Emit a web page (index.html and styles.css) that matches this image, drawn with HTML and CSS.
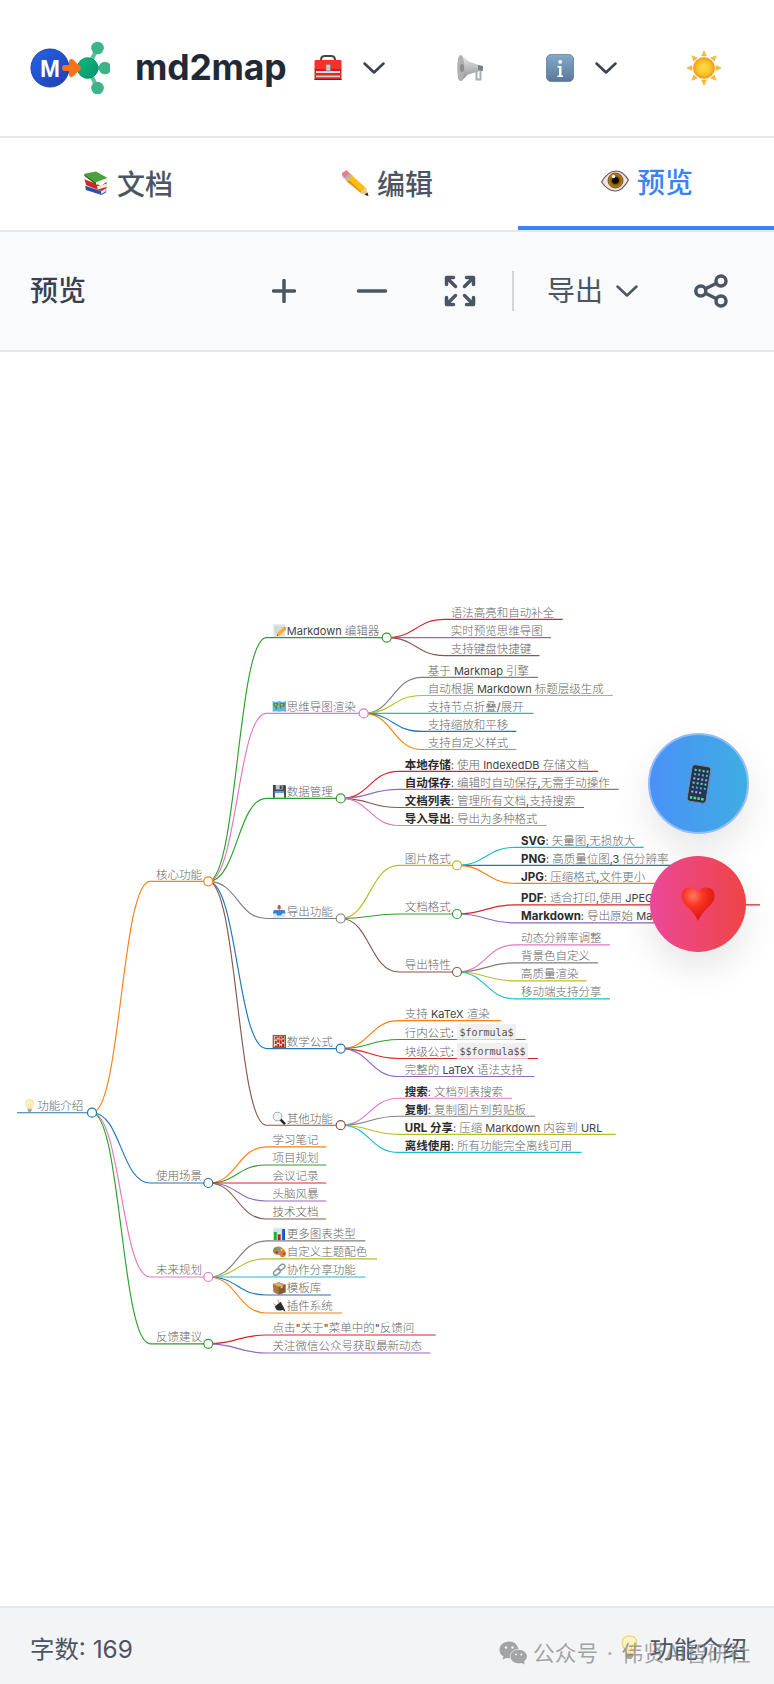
FILE: index.html
```html
<!DOCTYPE html>
<html lang="zh-CN">
<head>
    <meta charset="UTF-8">
    <meta name="viewport" content="width=device-width, initial-scale=1.0">
    <title>md2map</title>
    <link rel="stylesheet" href="styles.css">
</head>
<body>
    <!-- Shared icons -->
    <svg class="sprite" width="0" height="0" aria-hidden="true">
        <defs>
            <linearGradient id="gInfo" x1="0" y1="0" x2="0" y2="1"><stop offset="0" stop-color="#86a9c8"/><stop offset="1" stop-color="#57789b"/></linearGradient>
            <radialGradient id="gSun"><stop offset="0" stop-color="#ffe14a"/><stop offset="0.6" stop-color="#fdc52c"/><stop offset="1" stop-color="#f39a16"/></radialGradient>
            <linearGradient id="gHorn" x1="0" y1="0" x2="0" y2="1"><stop offset="0" stop-color="#ededed"/><stop offset="1" stop-color="#8c8c8c"/></linearGradient>
            <radialGradient id="gHeart" cx="0.35" cy="0.25" r="0.85"><stop offset="0" stop-color="#ff7b62"/><stop offset="0.35" stop-color="#fb3524"/><stop offset="1" stop-color="#cf0c05"/></radialGradient>
            <radialGradient id="gIris"><stop offset="0.2" stop-color="#2a1404"/><stop offset="0.6" stop-color="#8a5a10"/><stop offset="1" stop-color="#c99314"/></radialGradient>
            <linearGradient id="gBlue" x1="0" y1="0" x2="1" y2="1"><stop offset="0" stop-color="#2563eb"/><stop offset="1" stop-color="#1e40af"/></linearGradient>
            <linearGradient id="gGreen" x1="0" y1="0" x2="1" y2="1"><stop offset="0" stop-color="#10b981"/><stop offset="1" stop-color="#059669"/></linearGradient>
        </defs>
        <symbol id="chevron" viewBox="0 0 22 12"><path d="M1.5 1.5 11 10.5 20.5 1.5" fill="none" stroke="currentColor" stroke-width="2.5" stroke-linecap="round" stroke-linejoin="round"/></symbol>
        <symbol id="toolbox" viewBox="0 0 28 28">
            <path d="M7 9V6q0-4 4-4h6q4 0 4 4v3" fill="none" stroke="#444" stroke-width="2"/>
            <rect x="0.5" y="6" width="27" height="11" rx="1" fill="#fb2f2c"/><rect x="0.5" y="17" width="27" height="9" fill="#e32623"/>
            <rect x="2" y="17" width="24" height="2" fill="#d5dce2"/><rect x="2" y="21.5" width="24" height="1.8" fill="#c3d0d8"/>
            <rect x="0.5" y="15.5" width="27" height="1" fill="#8f1515"/><rect x="0.5" y="25" width="27" height="1" fill="#8f1515"/>
            <rect x="12" y="10.5" width="4.5" height="6.5" fill="#c9c9c9" stroke="#777" stroke-width="0.6"/>
        </symbol>
        <symbol id="megaphone" viewBox="0 0 28 28">
            <path d="M20.500 16v9.500h4V15" fill="none" stroke="#a3b0ba" stroke-width="2"/>
            <path d="M4 1Q8 3 13 7.500L24 11.500Q27 12 26.500 15.500L24 17 12 20.500 6 26.500Q3 28 2 23V5Q2 1 4 1z" fill="url(#gHorn)"/>
            <ellipse cx="4.800" cy="14" rx="3.600" ry="13" fill="#b0b0b0"/><ellipse cx="6" cy="14" rx="2" ry="4" fill="#8b8b8b"/>
            <path d="M22 11l5 1v5l-5-1z" fill="#77828b"/>
        </symbol>
        <symbol id="info" viewBox="0 0 28 28">
            <rect x="0.4" y="0.4" width="27.200" height="27.200" rx="5" fill="url(#gInfo)" stroke="#587895" stroke-width="0.8"/>
            <circle cx="14.200" cy="7.800" r="1.900" fill="#fff"/><path d="M11.500 12h4v9.500h1.500v1.400h-5.600v-1.400h1.700v-8.100h-1.600z" fill="#fff"/>
        </symbol>
        <symbol id="sun" viewBox="0 0 36 36">
            <g fill="#f9b934" stroke="#eeaa38" stroke-width="0.4">
                <path id="ray" d="M18 0.500 20.500 6h-5z"/><use href="#ray" transform="rotate(45 18 18)"/><use href="#ray" transform="rotate(90 18 18)"/><use href="#ray" transform="rotate(135 18 18)"/><use href="#ray" transform="rotate(180 18 18)"/><use href="#ray" transform="rotate(225 18 18)"/><use href="#ray" transform="rotate(270 18 18)"/><use href="#ray" transform="rotate(315 18 18)"/>
            </g>
            <circle cx="18" cy="18" r="10.600" fill="url(#gSun)" stroke="#e89d25" stroke-width="0.6"/>
        </symbol>
        <symbol id="books" viewBox="0 0 28 28">
            <path d="M2.500 17l17 5.500L25 19v5l-5 3-17-5.500z" fill="#2b52a8"/><path d="M19.500 23l5-3v3l-5 3z" fill="#e8eaf0"/>
            <path d="M1.500 10l18 7 6-4v6l-6 3.500-16-6z" fill="#d3261f"/><path d="M15 17.500l11-3v3.500l-10 3z" fill="#ece8e4"/>
            <path d="M1.500 4 14 1.500 26.500 8.500 14 13.500z" fill="#4ba13a"/><path d="M1.500 4l12.500 9.500v2.500L1.500 6.500z" fill="#276e28"/><path d="M14 13.500l12-5v2.500l-12 5z" fill="#e9efe5"/>
        </symbol>
        <symbol id="pencil" viewBox="0 0 28 28">
            <path d="M1 4 5.500 1l4 4-5 5Q0 7 1 4z" fill="#ef7f86"/><path d="M9 4l3 3-6 5.500-2.500-3z" fill="#b1b8c0"/>
            <path d="M11 6.500 26 20l-5.500 4.500L5.500 12z" fill="#fbbd12"/><path d="M9 12 21.500 24l-3-1.500L5.500 12z" fill="#df8c07"/>
            <path d="M24.500 18.500 27.500 27l-9-3z" fill="#efc795"/><path d="M26.500 23.500l1 3.500-4-1.300z" fill="#222"/>
        </symbol>
        <symbol id="eye" viewBox="0 0 28 22">
            <path d="M0.500 12Q7 1 15 1 22 1 27.500 10 21 21.500 14 21 7 21 0.500 12z" fill="#eee5e2" stroke="#6d504b" stroke-width="1.200"/>
            <circle cx="14.500" cy="10.500" r="7.500" fill="url(#gIris)" stroke="#563509" stroke-width="0.8"/><circle cx="14.500" cy="10.500" r="3.300" fill="#140a04"/><circle cx="12.500" cy="6.500" r="1.700" fill="#fff"/>
        </symbol>
        <symbol id="phone" viewBox="0 0 26 40">
            <g transform="rotate(9 13 20)">
                <rect x="3.500" y="1.500" width="19" height="37" rx="3" fill="#24364f" stroke="#7c8aa0" stroke-width="1"/>
                <path d="M6.500 6.500h14M6.500 19.500h14" stroke="#65d795" stroke-width="2" stroke-dasharray="2 2"/>
                <path d="M6.500 10.800h14M6.500 24h14" stroke="#4aa8f2" stroke-width="2" stroke-dasharray="2 2"/>
                <path d="M6.500 15.200h14M6.500 28.500h10" stroke="#b5a5e8" stroke-width="2" stroke-dasharray="2 2"/>
                <path d="M6 34.500h14" stroke="#54d987" stroke-width="2.600" stroke-dasharray="2.600 1.200"/>
            </g>
        </symbol>
        <symbol id="heart" viewBox="0 0 34 35"><path d="M17 34Q14 27 8 21.500 0.500 15 0.500 9 0.500 0.500 9 0.500 15 0.500 17 6 19 0.500 25 0.500 33.500 0.500 33.500 9 33.500 15 26 21.500 20 27 17 34z" fill="url(#gHeart)"/></symbol>
        <symbol id="bulb" viewBox="0 0 28 28">
            <path d="M14 1q8 0 8 8 0 4-3 7l-1 5h-8l-1-5q-3-3-3-7 0-8 8-8z" fill="#fdf3c5" stroke="#f3d57c" stroke-width="1.600"/>
            <path d="M11 10l2 10m4-10-2 10" stroke="#efcf83" fill="none"/><path d="M10 21h8v3l-2 3h-4l-2-3z" fill="#a8a69f"/>
        </symbol>
        <symbol id="memo" viewBox="0 0 28 28">
            <rect x="2" y="1" width="24" height="26" fill="#e0e2e5"/><path d="M5 7h17M5 11h14M5 15h10M5 19h8" stroke="#b7bbc1"/>
            <path d="M22 8l5 5-12 11-6 1 1-6z" fill="#f7b219"/><path d="M22 8l2-2q5 1 5 4l-2 3z" fill="#ee7f84"/><path d="M9 25l1-3 2 2z" fill="#333"/>
        </symbol>
        <symbol id="worldmap" viewBox="0 0 28 28">
            <path d="M0 3l7 2 7-2 7 2 7-2v22l-7-1-7 1-7-1-7 1z" fill="#55b9ea"/>
            <path d="M2 7h9l2 3-4 3 1 5-2 4-3-7-3-3zM15 7h11l-1 7-4 1-1-3-3 8-2-5z" fill="#5c8c36"/><path d="M5 9l4 1-2 3zM17 10l5-1-3 4z" fill="#e9d254"/>
        </symbol>
        <symbol id="floppy" viewBox="0 0 28 28">
            <path d="M1 1h25l2 2v24H1z" fill="#464b52"/><rect x="7" y="1" width="14" height="9" fill="#c7cbd0"/><rect x="15" y="2" width="4" height="7" fill="#3b3e42"/>
            <rect x="5" y="14" width="19" height="13" fill="#f2f3f4"/><rect x="5" y="14" width="19" height="3" fill="#4c8fdb"/>
        </symbol>
        <symbol id="outbox" viewBox="0 0 28 28">
            <path d="M1 14v13h26V14z" fill="#e3e7ea"/><path d="M3 11h22l2 7h-7l-2 4h-8l-2-4H1z" fill="#2f86d3"/>
            <path d="M14 10l-4-3.500h2V1h4v5.500h2z" fill="#ef3b36" stroke="#ef3b36"/>
        </symbol>
        <symbol id="abacus" viewBox="0 0 28 28">
            <rect x="1.500" y="1.500" width="25" height="25" fill="#f4e4d7" stroke="#97592f" stroke-width="3"/>
            <path d="M3 9h22" stroke="#97592f" stroke-width="1.500"/><path d="M7 4v4M7 12v7M7 22v3M12 3v3M12 10v6M12 19v6M17 4v4M17 11v8M17 22v3M22 3v4M22 10v5M22 18v7" stroke="#b81f22" stroke-width="4"/>
        </symbol>
        <symbol id="search" viewBox="0 0 28 28"><circle cx="10.500" cy="10.500" r="9" fill="#eef5f8" stroke="#98a4ad" stroke-width="2"/><path d="M17 17l9 9" stroke="#222" stroke-width="5"/></symbol>
        <symbol id="chart" viewBox="0 0 28 28"><rect x="1" y="1" width="26" height="26" fill="#e1ecf7"/><path d="M1 8h26M1 15h26M10 1v26M18 1v26" stroke="#b9cede"/><rect x="3" y="10" width="6" height="17" fill="#18b528"/><rect x="11" y="15" width="6" height="12" fill="#c42020"/><rect x="20" y="4" width="6" height="23" fill="#185bbf"/></symbol>
        <symbol id="palette" viewBox="0 0 28 28">
            <path d="M1 10Q4 2 13 3q8 1 14 10 3 8-4 12-5 1-7-3-2-3-5-2Q0 19 1 10z" fill="#c78443"/>
            <circle cx="6" cy="9" r="2.500" fill="#3cae49"/><circle cx="12" cy="7" r="2.300" fill="#38a2e5"/><circle cx="19" cy="10" r="2.300" fill="#f7d22f"/><circle cx="24" cy="18" r="3" fill="#e93c3c"/><circle cx="9" cy="15" r="2.600" fill="#7b3eb0"/>
        </symbol>
        <symbol id="link" viewBox="0 0 28 28"><g fill="none" stroke="#8795a1" stroke-width="3"><rect x="12" y="4" width="15" height="9" rx="4.500" transform="rotate(-42 19 9)"/><rect x="1" y="14" width="16" height="9" rx="4.500" transform="rotate(-42 9 18)"/></g></symbol>
        <symbol id="package" viewBox="0 0 28 28"><path d="M1 6l12-4 14 5v16l-14 5L2 22z" fill="#ac7441"/><path d="M1 6l12-4 14 5-14 5z" fill="#d1a066"/><path d="M13 12v16l14-5V7z" fill="#8b5930"/><path d="M7 4l14 5v5l-4 1v-5L4 5z" fill="#e3c08a"/></symbol>
        <symbol id="plug" viewBox="0 0 28 28"><path d="M2 9l6 4M11 1l3 7" stroke="#b29053" stroke-width="2"/><path d="M5 15 17 5l7 13 3 8-6-4q-10 3-13-1z" fill="#292b2e"/></symbol>
    </svg>

    <header class="header">
        <div class="brand">
            <svg class="brand-logo" width="80" height="54" viewBox="0 0 80 54">
                <path d="M57.500 27 67.500 7M57.500 27l10 20M57 27h17" stroke="#34b184" stroke-width="4" opacity="0.8"/>
                <g fill="#3db488"><circle cx="67.500" cy="7" r="6.300"/><circle cx="75" cy="27" r="6.300"/><circle cx="67.500" cy="47" r="6.300"/></g>
                <circle cx="20" cy="27" r="19" fill="url(#gBlue)" stroke="#1e40af"/>
                <circle cx="57.700" cy="27" r="10.300" fill="url(#gGreen)" stroke="#059669"/>
                <path d="M35 27h8" stroke="#f97316" stroke-width="6" stroke-linecap="round"/>
                <path d="M41.500 20.500 48.500 27l-7 6.500z" fill="#f97316" stroke="#f97316" stroke-width="5" stroke-linejoin="round"/>
                <text class="logo-letter" x="20" y="36.300" text-anchor="middle">M</text>
            </svg>
            <h1>md2map</h1>
        </div>
        <nav class="header-menu">
            <span class="menu-item menu-tools"><svg width="28" height="28"><use href="#toolbox"/></svg><svg class="chev" width="22" height="12"><use href="#chevron"/></svg></span>
            <span class="menu-item menu-news"><svg width="28" height="28"><use href="#megaphone"/></svg></span>
            <span class="menu-item menu-about"><svg width="28" height="28"><use href="#info"/></svg><svg class="chev" width="22" height="12"><use href="#chevron"/></svg></span>
            <span class="menu-item menu-theme"><svg width="36" height="36"><use href="#sun"/></svg></span>
        </nav>
    </header>

    <div class="tabs">
        <button class="tab"><svg width="26" height="26"><use href="#books"/></svg>文档</button>
        <button class="tab"><svg width="28" height="28"><use href="#pencil"/></svg>编辑</button>
        <button class="tab active"><svg width="28" height="22"><use href="#eye"/></svg>预览</button>
    </div>

    <div class="toolbar">
        <h2>预览</h2>
        <div class="toolbar-actions">
            <svg width="24" height="24" viewBox="0 0 24 24"><path d="M12 1.500v21M1.500 12h21"/></svg>
            <svg class="zoom-out" width="32" height="24" viewBox="0 0 32 24"><path d="M2.500 12h27"/></svg>
            <svg class="fit" width="32" height="32" viewBox="0 0 32 32"><path d="M2.500 9.500v-7h7M3 3l8.500 8.500M22.500 2.500h7v7M29 3l-8.500 8.500M2.500 22.500v7h7M3 29l8.500-8.500M29.500 22.500v7h-7M29 29l-8.500-8.500"/></svg>
            <span class="divider"></span>
            <span class="export"><span class="export-label">导出</span><svg class="chev" width="22" height="12"><use href="#chevron"/></svg></span>
            <svg class="share" width="34" height="34" viewBox="0 0 34 34"><path d="M12 14.500 22 9.500M12 19.500 22 24.500"/><circle cx="6.800" cy="17" r="5"/><circle cx="27" cy="7" r="5"/><circle cx="27" cy="27" r="5"/></svg>
        </div>
    </div>

    <main class="preview">
        <svg id="mindmap" width="774" height="1254" viewBox="0 352 774 1254"></svg>
        <button class="fab fab-phone"><svg width="26" height="40"><use href="#phone"/></svg></button>
        <button class="fab fab-heart"><svg width="34" height="35"><use href="#heart"/></svg></button>
    </main>

    <footer class="statusbar">
        <span>字数: 169</span>
        <span class="doc-name"><svg width="25" height="25"><use href="#bulb"/></svg>功能介绍</span>
        <span class="account">
            <svg width="28" height="24" viewBox="0 0 28 24" fill="#a3a4a5">
                <path d="M10.500 0.500C4.500 0.500 0.500 4 0.500 9q0 4 4 6.500l-1 3.200 4-2q1.500.5 3.500.5Q10 9 19.500 8C18.500 3.500 15 0.500 10.500 0.500z"/>
                <path d="M19.500 8.800c-4.800 0-8 2.900-8 6.700s3.500 6.800 8 6.800q1.500 0 3-.4l3.200 1.700-.8-2.800q3-2 3-5.300c0-3.800-3.600-6.700-8.400-6.700z"/>
                <g fill="#f3f4f6"><circle cx="7" cy="6.500" r="1.200"/><circle cx="13.500" cy="6.500" r="1.200"/><circle cx="17" cy="13.500" r="1"/><circle cx="22.300" cy="13.500" r="1"/></g>
            </svg>公众号 · 伟贤AI智研社
        </span>
    </footer>

    <script src="mindmap.js"></script>
</body>
</html>
```
FILE: styles.css
```css
* {
    box-sizing: border-box;
    margin: 0;
    padding: 0;
}

body {
    width: 774px;
    font-family: Inter, "Noto Sans CJK SC", sans-serif;
    background-color: #fff;
    color: #1f2937;
    overflow: hidden;
}

svg {
    display: block;
    flex-shrink: 0;
}

.sprite {
    position: absolute;
}

button {
    border: none;
    background: none;
    font-family: inherit;
}

/* Header */
.header {
    display: flex;
    align-items: center;
    height: 138px;
    padding-left: 30px;
    border-bottom: 2px solid #e5e7eb;
}

.brand {
    display: flex;
    align-items: center;
    gap: 25px;
    width: 284px;
}

h1 {
    font-size: 35.5px;
    font-weight: 700;
    line-height: 44px;
    letter-spacing: -0.2px;
    white-space: nowrap;
}

.logo-letter {
    font: bold 24px "Liberation Sans", sans-serif;
    fill: #fff;
}

.header-menu {
    display: flex;
    align-items: center;
    color: #374151;
}

.menu-item {
    display: flex;
    align-items: center;
    gap: 21px;
}

.menu-tools {
    width: 142px;
}

.menu-news {
    width: 90px;
}

.menu-about {
    width: 140px;
}

/* Tabs */
.tabs {
    display: grid;
    grid-template-columns: repeat(3, 1fr);
    gap: 3px;
    height: 94px;
    border-bottom: 2px solid #e5e7eb;
}

.tab {
    display: flex;
    align-items: center;
    justify-content: center;
    gap: 8px;
    padding-bottom: 3px;
    font-size: 28px;
    font-weight: 500;
    color: #4b5563;
}

.tab.active {
    padding-left: 2px;
    color: #3b82f6;
    border-bottom: 4px solid #3b82f6;
}

/* Toolbar */
.toolbar {
    display: flex;
    align-items: center;
    justify-content: space-between;
    height: 120px;
    padding: 0 46px 0 30px;
    background-color: #f9fafb;
    border-bottom: 2px solid #e5e7eb;
}

h2 {
    padding-bottom: 4px;
    font-size: 28px;
    font-weight: 500;
    color: #374151;
}

.toolbar-actions {
    display: flex;
    align-items: center;
    color: #4b5563;
}

.toolbar-actions > svg {
    fill: none;
    stroke: currentColor;
    stroke-width: 3.5;
    stroke-linecap: round;
    stroke-linejoin: round;
}

.zoom-out {
    margin-left: 60px;
}

.fit {
    margin-left: 56px;
}

.divider {
    width: 2px;
    height: 40px;
    margin: 0 33px 0 36px;
    background-color: #d1d5db;
}

.export {
    display: flex;
    align-items: center;
    gap: 13px;
    font-size: 28px;
}

.export-label {
    padding-bottom: 4px;
}

.share {
    margin-left: 56px;
}

/* Mind map */
.preview {
    position: relative;
    height: 1254px;
}

.link {
    fill: none;
    stroke-width: 1.15;
}

.node-dot {
    fill: #fff;
    stroke-width: 1.2;
}

.node-text {
    font-family: Inter, "Noto Sans CJK SC Light", "Noto Sans CJK SC", sans-serif;
    font-size: 11.5px;
    fill: #444;
}

.node-text .latin {
    font-size: 11px;
}

.node-text .cjk {
    font-family: "Noto Sans CJK SC Light", "Noto Sans CJK SC", sans-serif;
    font-weight: 300;
    fill: #666;
}

.node-text .strong {
    font-family: Inter, "Noto Sans CJK SC", sans-serif;
    font-weight: 700;
    fill: #2b2b2b;
}

.node-text .code {
    font-family: "DejaVu Sans Mono", monospace;
    font-size: 10px;
    fill: #555;
}

.code-bg {
    fill: #f0f0f0;
}

/* Floating buttons */
.fab {
    position: absolute;
    display: flex;
    align-items: center;
    justify-content: center;
    border-radius: 50%;
    box-shadow: 0 16px 36px rgba(0, 0, 0, 0.1);
}

.fab-phone {
    left: 648px;
    top: 381px;
    width: 101px;
    height: 101px;
    border: 2px solid #93bdf9;
    background: linear-gradient(90deg, #4b91f8, #3eade3);
}

.fab-heart {
    left: 650px;
    top: 504px;
    width: 96px;
    height: 96px;
    background: linear-gradient(90deg, #ec4899, #ef4444);
}

/* Status bar */
.statusbar {
    position: relative;
    display: flex;
    align-items: center;
    justify-content: space-between;
    height: 78px;
    padding: 2px 27px 0 30px;
    background-color: #f3f4f6;
    border-top: 2px solid #e5e7eb;
    font-size: 24.4px;
    color: #4b5563;
}

.doc-name {
    display: flex;
    align-items: center;
    gap: 7px;
}

.account {
    position: absolute;
    left: 499px;
    top: 30px;
    display: flex;
    align-items: center;
    gap: 6px;
    font-size: 21.7px;
    line-height: 30px;
    word-spacing: 2.5px;
    color: rgba(120, 120, 120, 0.68);
    white-space: nowrap;
}
```
FILE: mindmap.js
```js
const BLUE = '#1f77b4', ORANGE = '#ff7f0e', GREEN = '#2ca02c', RED = '#d62728', PURPLE = '#9467bd';
const BROWN = '#8c564b', PINK = '#e377c2', GRAY = '#7f7f7f', OLIVE = '#bcbd22', CYAN = '#17becf';

// [text, baseline y, right end, colour, children, icon]
// text: **strong** and `code` as in markdown
const root = ['功能介绍', 1112.7, 92, BLUE, [
    ['核心功能', 881.3, 208.3, ORANGE, [
        ['Markdown 编辑器', 637.6, 386.7, GREEN, [
            ['语法高亮和自动补全', 619.4, 562.7, RED],
            ['实时预览思维导图', 637.6, 551, PURPLE],
            ['支持键盘快捷键', 655.6, 539.5, BROWN]
        ], 'memo'],
        ['思维导图渲染', 713.4, 363.7, PINK, [
            ['基于 Markmap 引擎', 677.4, 538, GRAY],
            ['自动根据 Markdown 标题层级生成', 695.5, 613, OLIVE],
            ['支持节点折叠/展开', 713.4, 533.5, CYAN],
            ['支持缩放和平移', 731.4, 516.3, BLUE],
            ['支持自定义样式', 749.5, 516.3, ORANGE]
        ], 'worldmap'],
        ['数据管理', 798.4, 340.7, GREEN, [
            ['**本地存储**: 使用 IndexedDB 存储文档', 771.3, 598, RED],
            ['**自动保存**: 编辑时自动保存,无需手动操作', 789.4, 618.7, PURPLE],
            ['**文档列表**: 管理所有文档,支持搜索', 807.5, 584, BROWN],
            ['**导入导出**: 导出为多种格式', 825.5, 546.5, PINK]
        ], 'floppy'],
        ['导出功能', 918.5, 340.7, GRAY, [
            ['图片格式', 865.3, 457, OLIVE, [
                ['**SVG**: 矢量图,无损放大', 847.3, 643.7, CYAN],
                ['**PNG**: 高质量位图,3 倍分辨率', 865.3, 676, BLUE],
                ['**JPG**: 压缩格式,文件更小', 883.4, 656, ORANGE]
            ]],
            ['文档格式', 914, 457, GREEN, [
                ['**PDF**: 适合打印,使用 JPEG 压缩,支持多页 A4', 904.8, 760, RED],
                ['**Markdown**: 导出原始 Markdown 文件', 922.9, 730, PURPLE]
            ]],
            ['导出特性', 972, 457, BROWN, [
                ['动态分辨率调整', 944.8, 610, PINK],
                ['背景色自定义', 962.8, 598, GRAY],
                ['高质量渲染', 980.9, 586.7, OLIVE],
                ['移动端支持分享', 998.9, 610, CYAN]
            ]]
        ], 'outbox'],
        ['数学公式', 1048.6, 340.7, BLUE, [
            ['支持 KaTeX 渲染', 1020.6, 501, ORANGE],
            ['行内公式: `$formula$`', 1039.5, 525.7, GREEN],
            ['块级公式: `$$formula$$`', 1058.5, 538, RED],
            ['完整的 LaTeX 语法支持', 1076.5, 534.3, PURPLE]
        ], 'abacus'],
        ['其他功能', 1125.2, 340.7, BROWN, [
            ['**搜索**: 文档列表搜索', 1098.2, 512, PINK],
            ['**复制**: 复制图片到剪贴板', 1116.2, 535, GRAY],
            ['**URL 分享**: 压缩 Markdown 内容到 URL', 1134.3, 615.7, OLIVE],
            ['**离线使用**: 所有功能完全离线可用', 1152.4, 581.5, CYAN]
        ], 'search']
    ]],
    ['使用场景', 1183, 208.3, BLUE, [
        ['学习笔记', 1146.9, 326.3, ORANGE],
        ['项目规划', 1165, 326.3, GREEN],
        ['会议记录', 1183, 326.3, RED],
        ['头脑风暴', 1201, 326.3, PURPLE],
        ['技术文档', 1219, 326.3, BROWN]
    ]],
    ['未来规划', 1277, 208.3, PINK, [
        ['更多图表类型', 1240.9, 365.5, GRAY, [], 'chart'],
        ['自定义主题配色', 1258.9, 377, OLIVE, [], 'palette'],
        ['协作分享功能', 1277, 365.5, CYAN, [], 'link'],
        ['模板库', 1295, 331, BLUE, [], 'package'],
        ['插件系统', 1313, 342, ORANGE, [], 'plug']
    ]],
    ['反馈建议', 1343.8, 208.3, GREEN, [
        ['点击"关于"菜单中的"反馈问', 1335, 435.7, RED],
        ['关注微信公众号获取最新动态', 1353, 430.3, PURPLE]
    ]]
], 'bulb'];

const svg = document.getElementById('mindmap');

function add(tag, attrs, parent, text) {
    const el = document.createElementNS('http://www.w3.org/2000/svg', tag);
    Object.keys(attrs).forEach(key => el.setAttribute(key, attrs[key]));
    if (text) el.textContent = text;
    parent.appendChild(el);
    return el;
}

function drawText(source, x, y) {
    const label = add('text', { class: 'node-text', x, y: y - 2.7, 'xml:space': 'preserve' }, svg);
    source.split(/(\*\*.+?\*\*|`.+?`)/).filter(Boolean).forEach(part => {
        if (part.startsWith('**')) {
            add('tspan', { class: 'strong' }, label, part.slice(2, -2));
        } else if (part.startsWith('`')) {
            const code = part.slice(1, -1);
            const bg = add('rect', { class: 'code-bg', x: 456.7, y: y - 15.4, width: code.length * 6.02 + 5.2, height: 15.6, rx: 1 }, svg);
            svg.insertBefore(bg, label);
            add('tspan', { class: 'code', x: 459.4, dy: -0.6 }, label, code);
        } else {
            part.split(/([\u4e00-\u9fff]+)/).filter(Boolean).forEach(run => {
                add('tspan', { class: /[\u4e00-\u9fff]/.test(run) ? 'cjk' : 'latin' }, label, run);
            });
        }
    });
}

function drawNode(node, x, parent) {
    const [text, y, end, color, children = [], icon] = node;
    let d = `M${x} ${y}`;
    if (parent) {
        const mid = (parent.x + x) / 2;
        d = `M${parent.x} ${parent.y}C${mid} ${parent.y} ${mid} ${y} ${x} ${y}`;
    }
    add('path', { class: 'link', d: `${d}H${end}`, stroke: color }, svg);

    children.forEach(child => drawNode(child, end + 58.2, { x: end, y }));

    const left = x + 5.9;
    if (icon) add('use', { href: '#' + icon, x: left, y: y - 13.8, width: 13.6, height: 13.6 }, svg);
    drawText(text, icon ? left + 14.4 : left, y);
    if (children.length) add('circle', { class: 'node-dot', cx: end, cy: y, r: 4.5, stroke: color }, svg);
}

drawNode(root, 17, null);
```
